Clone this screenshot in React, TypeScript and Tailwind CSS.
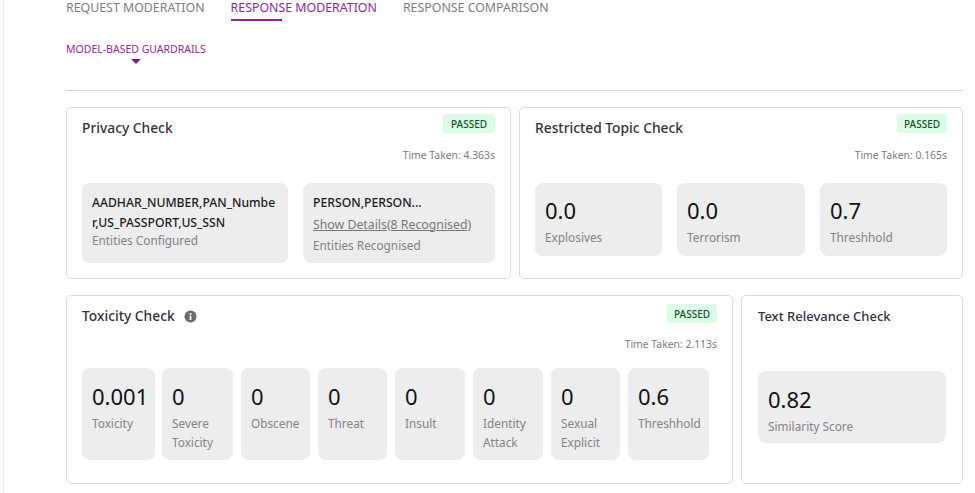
const PassedBadge = ({ shift, wide }: { shift?: boolean; wide?: boolean }) => (
  <span className={`rounded-[3px] bg-[#dcfce7] h-[19px] flex items-center justify-center text-[10px] font-medium text-[#14532d] leading-none ${wide ? 'w-[52px]' : 'w-[50px]'} ${shift ? 'mt-px' : '-mt-px'}`}>PASSED</span>
);

function Stat({ value, label, className }: { value: string; label: string; className: string }) {
  return (
    <div className={`rounded-lg bg-[#ededed] ${className}`}>
      <div className="text-[22px] leading-[30px] text-[#111]">{value}</div>
      <div className="mt-[3px] text-[11.8px] leading-[19px] text-[#85808a]">{label}</div>
    </div>
  );
}

function CheckHead({ title, time, info, wide }: { title: string; time: string; info?: boolean; wide?: boolean }) {
  return (
    <>
      <div className="flex justify-between">
        <div className="flex items-center h-[27px] gap-[9px] text-[13.8px] font-medium text-[#33313a]">
          {title}
          {info && (
            <svg width="13" height="13" viewBox="0 0 13 13" className="-mt-[1px]">
              <circle cx="6.5" cy="6.5" r="6" fill="#6b6b6f" />
              <rect x="5.6" y="5.6" width="1.8" height="4.4" fill="#fff" />
              <rect x="5.6" y="3" width="1.8" height="1.7" fill="#fff" />
            </svg>
          )}
        </div>
        <PassedBadge shift={info} wide={wide} />
      </div>
      <div className={`text-right text-[10.4px] leading-[14px] text-[#7a7a80] ${info ? 'mt-[7px]' : 'mt-[6px]'}`}>Time Taken: {time}</div>
    </>
  );
}

const toxicity = [
  { value: '0.001', label: 'Toxicity', w: 'w-[73px]' },
  { value: '0', label: 'Severe Toxicity', w: 'w-[71px]' },
  { value: '0', label: 'Obscene', w: 'w-[69px]' },
  { value: '0', label: 'Threat', w: 'w-[69px]' },
  { value: '0', label: 'Insult', w: 'w-[70px]' },
  { value: '0', label: 'Identity Attack', w: 'w-[70px]' },
  { value: '0', label: 'Sexual Explicit', w: 'w-[69px]' },
  { value: '0.6', label: 'Threshhold', w: 'w-[81px]' },
];

export default function App() {
  return (
    <div className="h-[493px] w-[975px] overflow-hidden bg-white font-['Noto_Sans',sans-serif]">
      <div className="h-full ml-[3px] border-l border-[#ececec] pl-[62px] pr-[12px]">
        {/* Tabs */}
        <div className="flex gap-[26px] pt-px text-[12.37px] leading-[14px] text-[#7c7c84]">
          <div>REQUEST MODERATION</div>
          <div className="text-[#93278f]">
            RESPONSE MODERATION
            <div className="mt-[4px] h-[2px] w-[51px] bg-[#93278f]" />
          </div>
          <div>RESPONSE COMPARISON</div>
        </div>

        {/* Sub tab */}
        <div className="mt-[21px] h-[48px] border-b border-[#d6d2e0] box-content">
          <div className="w-fit text-[10.5px] leading-[14px] text-[#93278f]">
            MODEL-BASED GUARDRAILS
            <div className="mx-auto mt-[3px] h-0 w-0 border-x-[5px] border-t-[5px] border-x-transparent border-t-[#7b1f86]" />
          </div>
        </div>

        {/* Top row */}
        <div className="mt-[16px] flex gap-2">
          <div className="h-[172px] w-[445px] rounded-[5px] border border-[#dcdcdc] px-[15px] pt-[7px]">
            <CheckHead title="Privacy Check" time="4.363s" wide />
            <div className="mt-[21px] flex gap-[15px]">
              <div className="h-[80px] w-[206px] rounded-lg bg-[#ededed] px-[10px] pt-[10px]">
                <div className="break-all text-[12.2px] font-medium leading-[19.5px] text-[#1c1c1c]">AADHAR_NUMBER,PAN_Number,US_PASSPORT,US_SSN</div>
                <div className="text-[11.8px] leading-[17px] text-[#85808a]">Entities Configured</div>
              </div>
              <div className="h-[80px] w-[192px] rounded-lg bg-[#ededed] px-[10px] pt-[10px]">
                <div className="text-[12.2px] font-medium leading-[19.5px] text-[#1c1c1c]">PERSON,PERSON...</div>
                <div className="mt-[2px] text-[12.3px] leading-[20px] text-[#777] underline">Show Details(8 Recognised)</div>
                <div className="text-[11.8px] leading-[20px] text-[#85808a]">Entities Recognised</div>
              </div>
            </div>
          </div>

          <div className="h-[172px] w-[444px] rounded-[5px] border border-[#dcdcdc] px-[15px] pt-[7px]">
            <CheckHead title="Restricted Topic Check" time="0.165s" />
            <div className="mt-[21px] flex gap-[15px]">
              <Stat value="0.0" label="Explosives" className="h-[73px] w-[127px] px-[10px] pt-[12px]" />
              <Stat value="0.0" label="Terrorism" className="h-[73px] w-[128px] px-[10px] pt-[12px]" />
              <Stat value="0.7" label="Threshhold" className="h-[73px] w-[127px] px-[10px] pt-[12px]" />
            </div>
          </div>
        </div>

        {/* Bottom row */}
        <div className="mt-[16px] flex gap-2">
          <div className="h-[189px] w-[667px] rounded-[5px] border border-[#dcdcdc] px-[15px] pt-[7px]">
            <CheckHead title="Toxicity Check" time="2.113s" info />
            <div className="mt-[17px] flex">
              {toxicity.map((t, i) => (
                <Stat key={t.label} value={t.value} label={t.label} className={`h-[92px] ${t.w} px-[10px] pt-[13px] ${i === 0 ? 'mr-[7px]' : 'mr-2'}`} />
              ))}
            </div>
          </div>

          <div className="h-[189px] w-[222px] rounded-[5px] border border-[#dcdcdc] px-[16px] pt-[7px]">
            <div className="flex h-[27px] items-center text-[13px] font-medium text-[#33313a]">Text Relevance Check</div>
            <div className="mt-[41px] h-[72px] rounded-lg bg-[#ededed] px-[10px] pt-[13px]">
              <div className="text-[22px] leading-[30px] text-[#111]">0.82</div>
              <div className="mt-[3px] text-[11.8px] leading-[19px] text-[#85808a]">Similarity Score</div>
            </div>
          </div>
        </div>
      </div>
    </div>
  );
}
